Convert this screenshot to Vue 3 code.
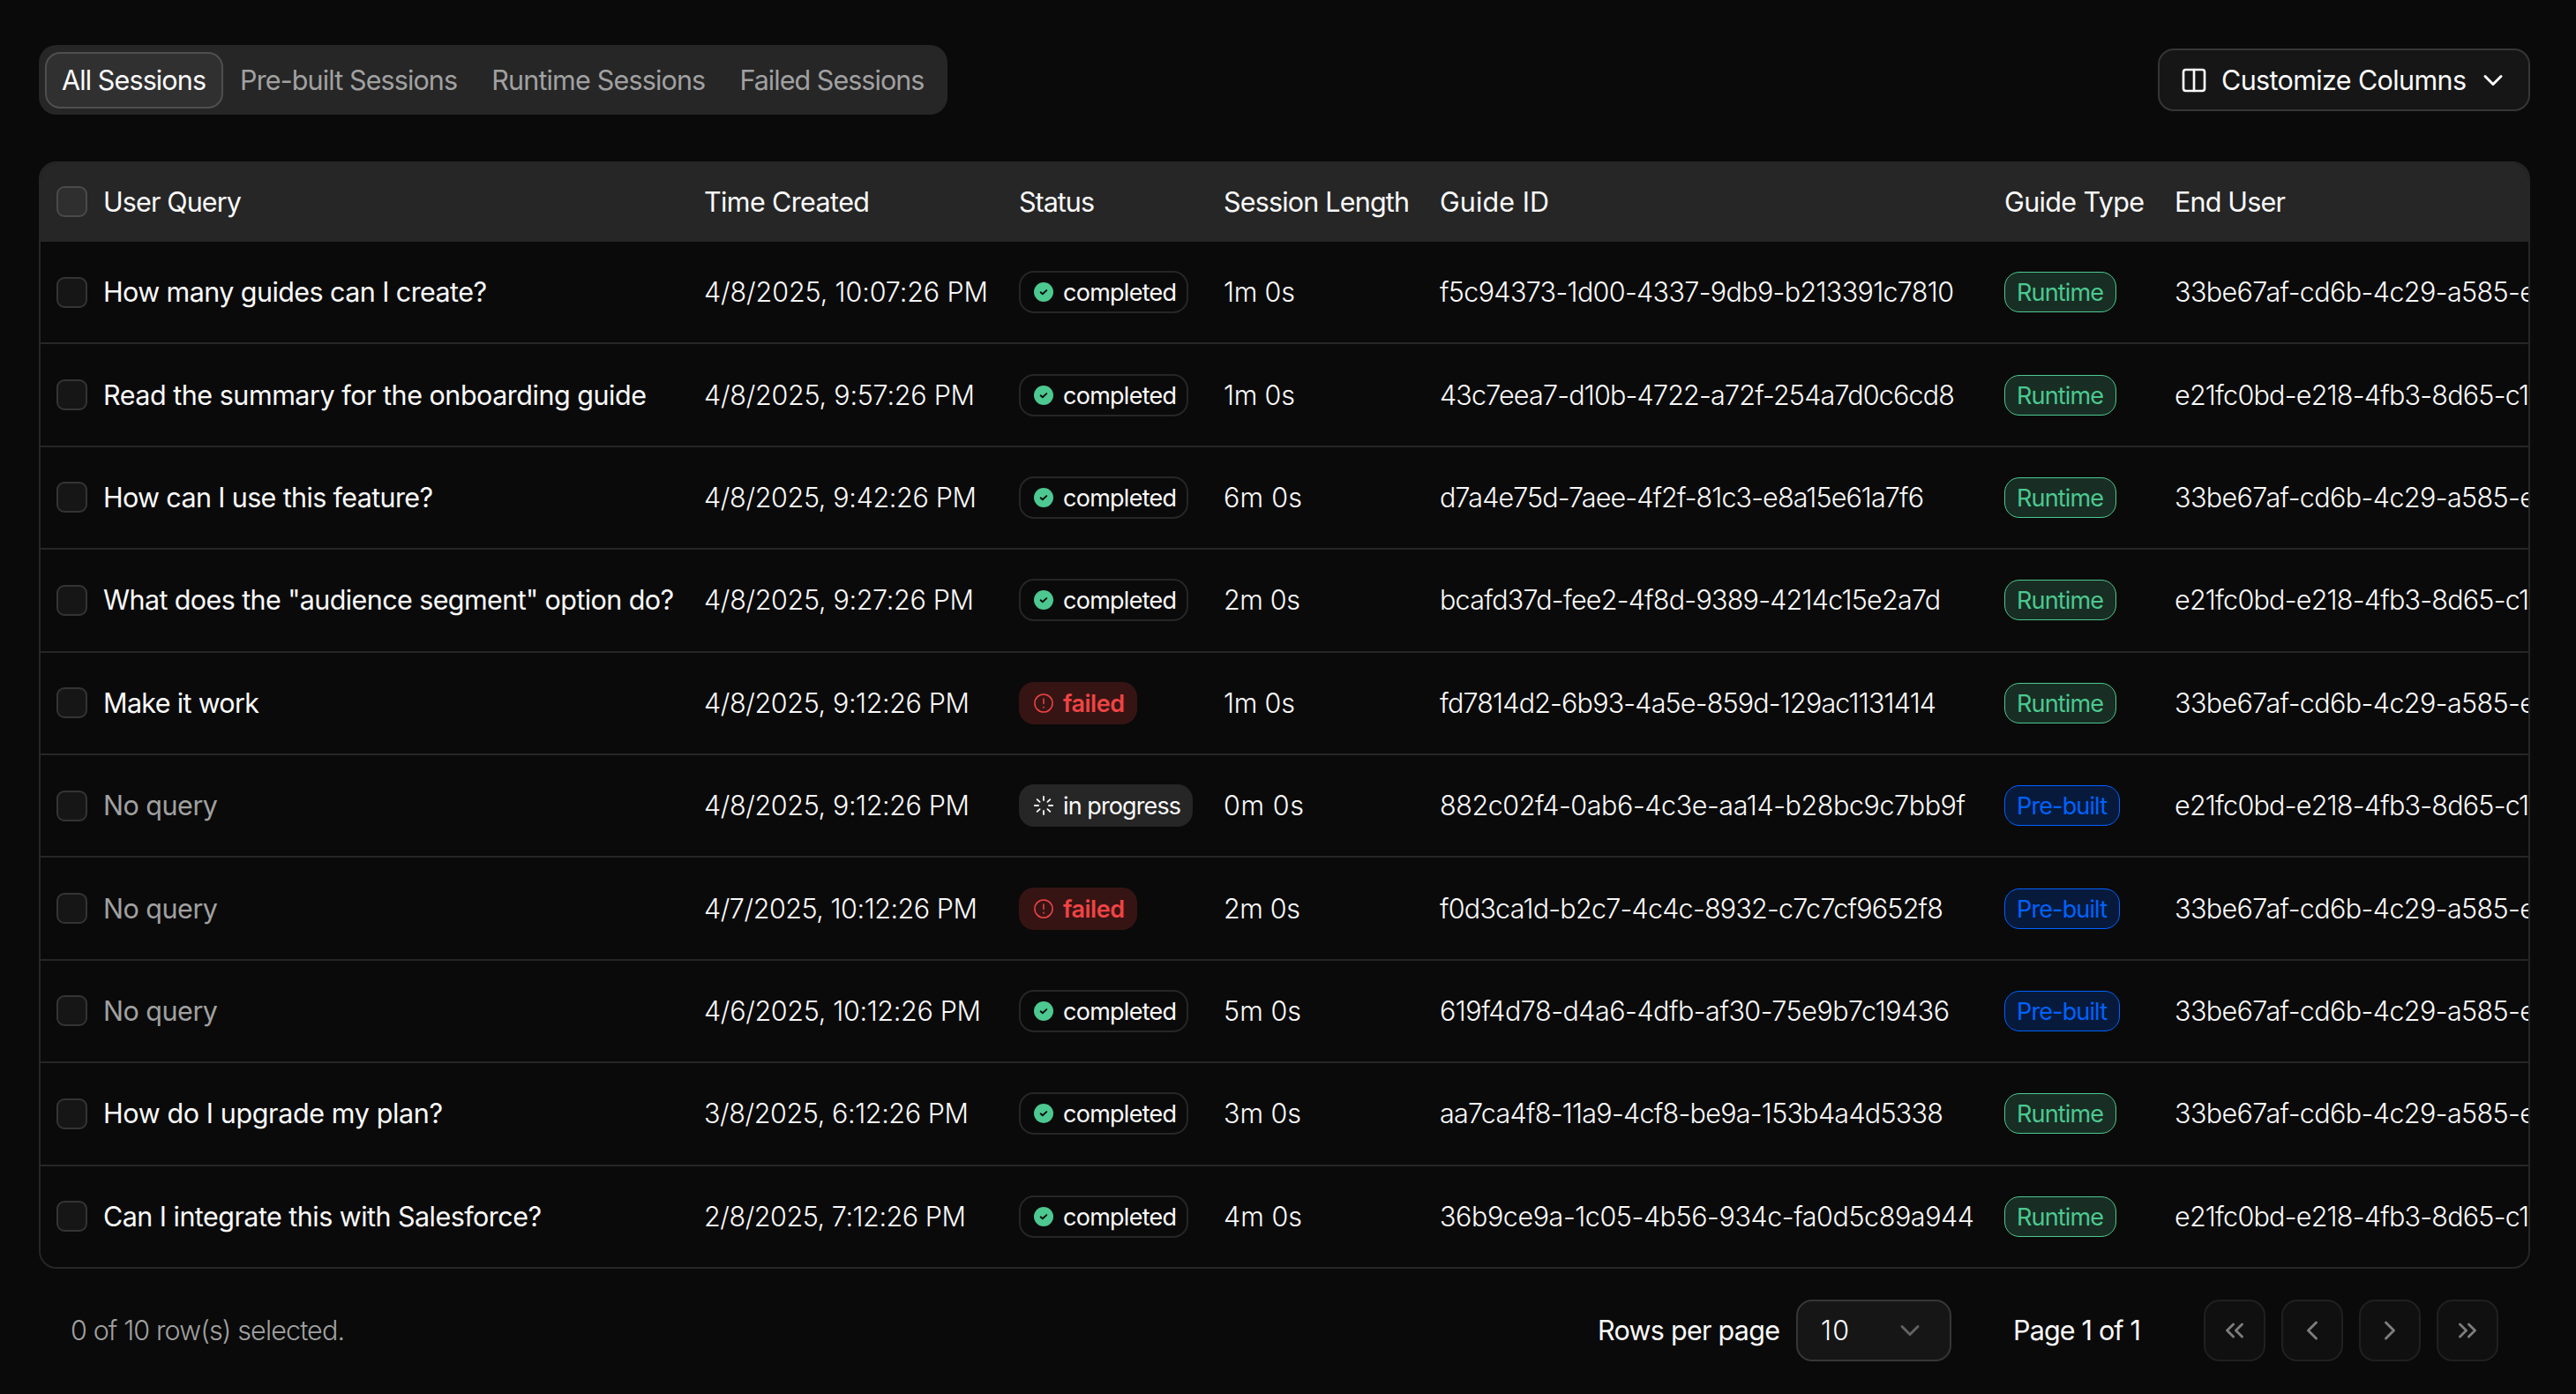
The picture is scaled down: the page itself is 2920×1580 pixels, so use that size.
<template>
  <div class="page">
    <div class="toolbar">
      <div class="tabs">
        <button
          v-for="tab of tabs"
          :key="tab.name"
          class="tab"
          :class="{ '-active': tab.name === activeTab }"
          @click="activeTab = tab.name"
        >
          <span v-fit="tab.width" class="text">{{ tab.name }}</span>
        </button>
      </div>
      <button class="customize">
        <svg class="icon-columns" viewBox="0 0 24 24">
          <rect x="3" y="3" width="18" height="18" rx="2" />
          <path d="M12 3v18" />
        </svg>
        <span v-fit="275" class="text">Customize Columns</span>
        <svg class="icon-chevron" viewBox="0 0 24 24"><path d="m6 9 6 6 6-6" /></svg>
      </button>
    </div>

    <div class="table">
      <div class="row head">
        <div class="cell check-cell"><span class="checkbox"></span></div>
        <div v-for="col of columns" :key="col.name" class="cell">
          <span v-fit="col.width" class="text">{{ col.name }}</span>
        </div>
      </div>
      <div v-for="s of sessions" :key="s.guide" class="row">
        <div class="cell check-cell">
          <span class="checkbox" :class="{ '-checked': s.selected }" @click="s.selected = !s.selected"></span>
        </div>
        <div class="cell query" :class="{ '-empty': !s.query }">
          <span v-fit="s.queryWidth" class="text">{{ s.query || 'No query' }}</span>
        </div>
        <div class="cell"><span v-fit="s.timeWidth" class="text">{{ s.time }}</span></div>
        <div class="cell">
          <span class="status" :class="statuses[s.status].class">
            <svg v-if="s.status === 'completed'" viewBox="0 0 24 24">
              <circle cx="12" cy="12" r="12" class="disc" />
              <path d="m8.3 12.3 2.4 2.2 4.9-4.6" class="tick" />
            </svg>
            <svg v-else-if="s.status === 'failed'" viewBox="0 0 24 24">
              <circle cx="12" cy="12" r="11" />
              <path d="M12 6.5v6M12 16.6v1" />
            </svg>
            <svg v-else viewBox="0 0 24 24">
              <path d="M12 1v4.5M12 18.5V23M1 12h4.5M18.5 12H23M4 4.5l3.2 3M16.8 16.5l3.2 3M4 19.5l3.2-3M16.8 7.5l3.2-3" />
            </svg>
            <span v-fit="statuses[s.status].width" class="text">{{ s.status }}</span>
          </span>
        </div>
        <div class="cell"><span v-fit="s.lengthWidth" class="text">{{ s.length }}</span></div>
        <div class="cell"><span v-fit="s.guideWidth" class="text">{{ s.guide }}</span></div>
        <div class="cell">
          <span class="type" :class="s.type === 'Runtime' ? '-runtime' : '-prebuilt'">
            <span v-fit="s.type === 'Runtime' ? 96 : 100" class="text">{{ s.type }}</span>
          </span>
        </div>
        <div class="cell"><span v-fit="users[s.user].width" class="text">{{ users[s.user].id }}</span></div>
      </div>
    </div>

    <div class="footer">
      <div class="selected"><span v-fit="308" class="text">{{ selectedCount }} of {{ sessions.length }} row(s) selected.</span></div>
      <div class="rows-label"><span v-fit="204" class="text">Rows per page</span></div>
      <button class="select">
        <span v-fit="29" class="text">10</span>
        <svg class="icon-chevron" viewBox="0 0 24 24"><path d="m6 9 6 6 6-6" /></svg>
      </button>
      <div class="page-label"><span v-fit="142" class="text">Page 1 of 1</span></div>
      <div class="pager">
        <button v-for="p of pager" :key="p.name" class="pager-btn" :aria-label="p.name">
          <svg :class="{ '-double': p.double }" viewBox="0 0 24 24"><path :d="p.path" /></svg>
        </button>
      </div>
    </div>
  </div>
</template>

<script setup>
import { computed, ref } from 'vue'

// tracks the text so that it takes exactly the given width (side bearings come on top)
const vFit = {
  mounted(el, { value }) {
    const count = el.textContent.length
    const natural = el.getBoundingClientRect().width
    el.style.letterSpacing = (value + 3 - natural) / (count - 1) + 'px'
  },
}

const activeTab = ref('All Sessions')

const tabs = [
  { name: 'All Sessions', width: 161 },
  { name: 'Pre-built Sessions', width: 244 },
  { name: 'Runtime Sessions', width: 240 },
  { name: 'Failed Sessions', width: 207 },
]

const columns = [
  { name: 'User Query', width: 154 },
  { name: 'Time Created', width: 185 },
  { name: 'Status', width: 83 },
  { name: 'Session Length', width: 208 },
  { name: 'Guide ID', width: 121 },
  { name: 'Guide Type', width: 156 },
  { name: 'End User', width: 123 },
]

const statuses = {
  completed: { class: '-completed', width: 126 },
  failed: { class: '-failed', width: 67 },
  'in progress': { class: '-progress', width: 131 },
}

const users = [
  { id: '33be67af-cd6b-4c29-a585-e', width: 406 },
  { id: 'e21fc0bd-e218-4fb3-8d65-c1', width: 399 },
]

const sessions = ref([
  { query: 'How many guides can I create?', queryWidth: 432, time: '4/8/2025, 10:07:26 PM', timeWidth: 319, status: 'completed', length: '1m 0s', lengthWidth: 78, guide: 'f5c94373-1d00-4337-9db9-b213391c7810', guideWidth: 580, type: 'Runtime', user: 0 },
  { query: 'Read the summary for the onboarding guide', queryWidth: 613, time: '4/8/2025, 9:57:26 PM', timeWidth: 304, status: 'completed', length: '1m 0s', lengthWidth: 78, guide: '43c7eea7-d10b-4722-a72f-254a7d0c6cd8', guideWidth: 581, type: 'Runtime', user: 1 },
  { query: 'How can I use this feature?', queryWidth: 371, time: '4/8/2025, 9:42:26 PM', timeWidth: 306, status: 'completed', length: '6m 0s', lengthWidth: 86, guide: 'd7a4e75d-7aee-4f2f-81c3-e8a15e61a7f6', guideWidth: 546, type: 'Runtime', user: 0 },
  { query: 'What does the "audience segment" option do?', queryWidth: 644, time: '4/8/2025, 9:27:26 PM', timeWidth: 303, status: 'completed', length: '2m 0s', lengthWidth: 84, guide: 'bcafd37d-fee2-4f8d-9389-4214c15e2a7d', guideWidth: 565, type: 'Runtime', user: 1 },
  { query: 'Make it work', queryWidth: 174, time: '4/8/2025, 9:12:26 PM', timeWidth: 298, status: 'failed', length: '1m 0s', lengthWidth: 78, guide: 'fd7814d2-6b93-4a5e-859d-129ac1131414', guideWidth: 560, type: 'Runtime', user: 0 },
  { query: '', queryWidth: 127, time: '4/8/2025, 9:12:26 PM', timeWidth: 298, status: 'in progress', length: '0m 0s', lengthWidth: 88, guide: '882c02f4-0ab6-4c3e-aa14-b28bc9c7bb9f', guideWidth: 593, type: 'Pre-built', user: 1 },
  { query: '', queryWidth: 127, time: '4/7/2025, 10:12:26 PM', timeWidth: 307, status: 'failed', length: '2m 0s', lengthWidth: 84, guide: 'f0d3ca1d-b2c7-4c4c-8932-c7c7cf9652f8', guideWidth: 568, type: 'Pre-built', user: 0 },
  { query: '', queryWidth: 127, time: '4/6/2025, 10:12:26 PM', timeWidth: 311, status: 'completed', length: '5m 0s', lengthWidth: 85, guide: '619f4d78-d4a6-4dfb-af30-75e9b7c19436', guideWidth: 575, type: 'Pre-built', user: 0 },
  { query: 'How do I upgrade my plan?', queryWidth: 382, time: '3/8/2025, 6:12:26 PM', timeWidth: 297, status: 'completed', length: '3m 0s', lengthWidth: 85, guide: 'aa7ca4f8-11a9-4cf8-be9a-153b4a4d5338', guideWidth: 568, type: 'Runtime', user: 0 },
  { query: 'Can I integrate this with Salesforce?', queryWidth: 494, time: '2/8/2025, 7:12:26 PM', timeWidth: 294, status: 'completed', length: '4m 0s', lengthWidth: 86, guide: '36b9ce9a-1c05-4b56-934c-fa0d5c89a944', guideWidth: 603, type: 'Runtime', user: 1 },
])

const selectedCount = computed(() => sessions.value.filter((s) => s.selected).length)

const pager = [
  { name: 'First page', double: true, path: 'm11 17-5-5 5-5M18 17l-5-5 5-5' },
  { name: 'Previous page', path: 'm15 18-6-6 6-6' },
  { name: 'Next page', path: 'm9 18 6-6-6-6' },
  { name: 'Last page', double: true, path: 'm6 17 5-5-5-5M13 17l5-5-5-5' },
]
</script>

<style>
body {
  background: #0a0a0a;
}
</style>

<style scoped>
.page {
  box-sizing: border-box;
  width: 2920px;
  height: 1580px;
  padding: 51px 52px 0 44px;
  overflow: hidden;
  background: #0a0a0a;
  color: #fafafa;
  font-family: Inter, 'Liberation Sans', sans-serif;
  font-size: 30.5px;
  font-weight: 300;
  line-height: 40px;
}

button {
  box-sizing: border-box;
  margin: 0;
  padding: 0;
  border: 0;
  background: none;
  color: inherit;
  font: inherit;
  cursor: pointer;
}

svg {
  flex: none;
  fill: none;
  stroke: currentColor;
  stroke-width: 2;
  stroke-linecap: round;
  stroke-linejoin: round;
}

.text {
  display: inline-block;
  flex: none;
  white-space: nowrap;
}

.toolbar {
  display: flex;
  justify-content: space-between;
  align-items: center;
  height: 79px;
}

.tabs {
  display: flex;
  align-items: center;
  box-sizing: border-box;
  height: 79px;
  padding: 0 7px;
  border-radius: 20px;
  background: #262626;
}

.tab {
  height: 64px;
  padding: 0 18px 0 17px;
  border: 2px solid transparent;
  border-radius: 17px;
  color: #a1a1a1;
  font-weight: 400;
}

.tab.-active {
  border-color: #4f4f4f;
  background: #303030;
  color: #fafafa;
}

.customize {
  display: flex;
  align-items: center;
  width: 422px;
  height: 71px;
  padding-left: 23px;
  border: 2px solid #363636;
  border-radius: 18px;
  background: #161616;
  font-weight: 400;
}

.icon-columns {
  width: 32px;
  height: 32px;
  margin-right: 15px;
}

.icon-chevron {
  width: 36px;
  height: 36px;
}

.customize .icon-chevron {
  margin-left: 13px;
}

.table {
  box-sizing: border-box;
  width: 2824px;
  height: 1255px;
  margin-top: 53px;
  border: 2px solid #262626;
  border-radius: 20px;
  overflow: hidden;
}

.row {
  display: grid;
  grid-template-columns: 71px 681px 357px 232px 245px 640px 193px 401px;
  align-items: center;
  box-sizing: border-box;
  height: 116.4px;
  border-bottom: 2px solid #262626;
}

.row:last-child {
  height: 114.4px;
  border-bottom: 0;
}

.row.head {
  height: 89px;
  background: #262626;
  font-weight: 400;
}

.cell {
  display: flex;
  align-items: center;
  min-width: 0;
}

.check-cell {
  padding-left: 18px;
}

.checkbox {
  box-sizing: border-box;
  width: 35px;
  height: 35px;
  border: 2px solid #343434;
  border-radius: 9px;
  background: #161616;
}

.checkbox.-checked {
  background: #fafafa;
}

.head .checkbox {
  border-color: #4a4a4a;
  background: #2f2f2f;
}

.query {
  font-weight: 400;
}

.query.-empty {
  color: #a1a1a1;
}

.status,
.type {
  display: flex;
  align-items: center;
  box-sizing: border-box;
  height: 48px;
  border-radius: 17px;
  font-size: 27px;
  line-height: 36px;
  font-weight: 400;
}

.status {
  padding: 0 12px 0 15px;
  border: 2px solid transparent;
}

.status svg {
  width: 22px;
  height: 22px;
  margin-right: 11px;
}

.status .text,
.type .text {
  padding-top: 2px;
}

.status.-completed {
  border-color: #262626;
}

.status.-failed {
  background: #371414;
  color: #ef4444;
  font-weight: 600;
}

.status.-failed svg {
  stroke-width: 1.6;
}

.status.-progress {
  background: #262626;
}

.disc {
  fill: #4cc890;
  stroke: none;
}

.tick {
  stroke: #0a0a0a;
  stroke-width: 2;
}

.type {
  height: 46px;
  padding: 0 14px 0 13px;
  border: 1px solid;
}

.type.-runtime {
  background: #182e24;
  color: #4cc890;
}

.type.-prebuilt {
  background: #071a3c;
  color: #0062ff;
}

.footer {
  display: flex;
  align-items: center;
  height: 70px;
  margin-top: 35px;
  padding-left: 36px;
}

.selected {
  flex: none;
  width: 1731px;
  color: #a1a1a1;
}

.rows-label {
  flex: none;
  width: 225px;
  font-weight: 400;
}

.select {
  display: flex;
  align-items: center;
  flex: none;
  width: 176px;
  height: 70px;
  padding-left: 26px;
  border: 2px solid #363636;
  border-radius: 18px;
  background: #161616;
}

.select .icon-chevron {
  margin-left: 50px;
  color: #626262;
}

.page-label {
  flex: none;
  width: 216px;
  margin-left: 70px;
  font-weight: 400;
}

.pager {
  display: flex;
  gap: 18px;
}

.pager-btn {
  display: flex;
  align-items: center;
  justify-content: center;
  width: 70px;
  height: 70px;
  border: 2px solid #202020;
  border-radius: 18px;
  background: #101010;
  color: #7d7d7d;
}

.pager-btn svg {
  width: 36px;
  height: 36px;
}

.pager-btn svg.-double {
  width: 34px;
  height: 34px;
}
</style>
